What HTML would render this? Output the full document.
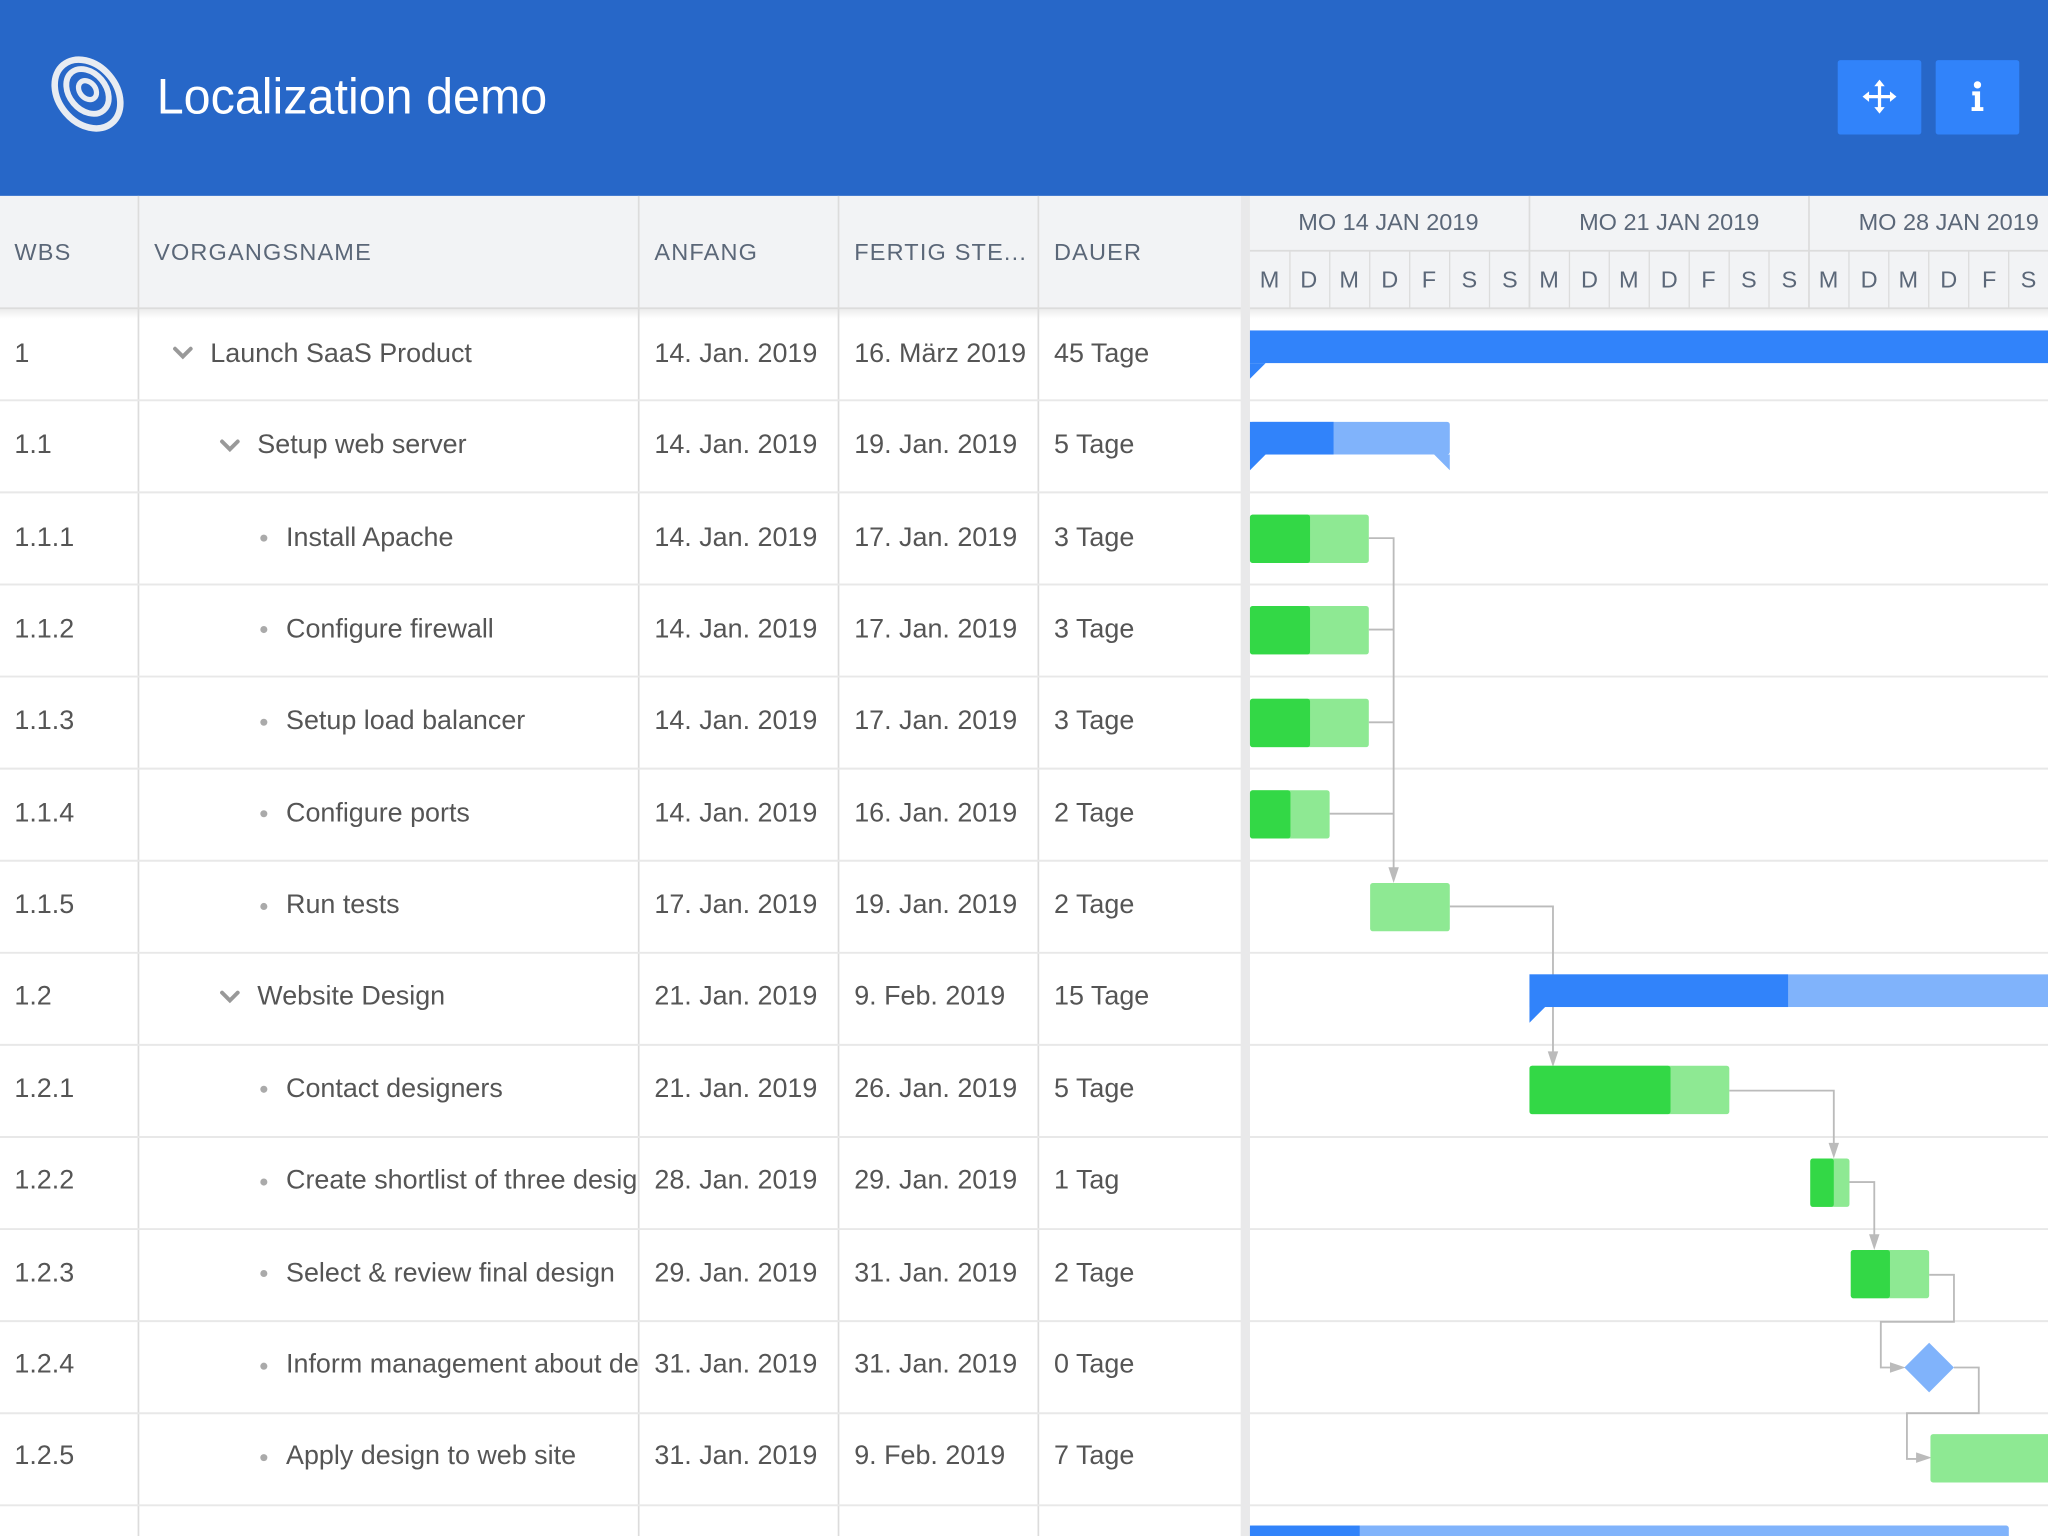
<!DOCTYPE html>
<html><head><meta charset="utf-8"><style>
html,body{margin:0;padding:0;background:#fff;overflow:hidden}
svg{display:block}
text{font-family:"Liberation Sans",sans-serif}
.h{fill:#5b6778;font-size:18px;letter-spacing:0.9px}
.t{fill:#555;font-size:20.6px}
.d{fill:#5b6778;font-size:18px;text-anchor:middle}
</style></head><body>
<svg width="2048" height="1536" viewBox="0 0 1568 1176" xmlns="http://www.w3.org/2000/svg">
<defs>
<clipPath id="nc"><rect x="106" y="236" width="383" height="940"/></clipPath>
<linearGradient id="sh" x1="0" y1="0" x2="0" y2="1"><stop offset="0" stop-color="#000" stop-opacity="0.08"/><stop offset="1" stop-color="#000" stop-opacity="0"/></linearGradient>
</defs>
<rect width="1568" height="1176" fill="#fff"/>
<rect x="0" y="0" width="1568" height="150" fill="#2767c8"/>
<g fill="none" stroke="#e8ecf2" stroke-linecap="round">
<ellipse cx="67" cy="72" rx="22" ry="29" transform="rotate(-40 67 72)" stroke-width="5"/>
<ellipse cx="67" cy="70" rx="14" ry="19" transform="rotate(-40 67 70)" stroke-width="4.5"/>
<ellipse cx="67" cy="69" rx="6" ry="8" transform="rotate(-40 67 69)" stroke-width="4"/>
</g>
<text x="120" y="87" fill="#fff" font-size="38" textLength="299" lengthAdjust="spacingAndGlyphs">Localization demo</text>
<rect x="1407" y="46" width="64" height="57" rx="2" fill="#3183fa"/>
<rect x="1482" y="46" width="64" height="57" rx="2" fill="#3183fa"/>
<g fill="#fff" stroke="#fff">
<path d="M1439 63v22M1428 74h22" stroke-width="2.5" fill="none"/>
<path d="M1439 61l-4 5h8zM1439 87l-4-5h8zM1426 74l5-4v8zM1452 74l-5-4v8z" stroke="none"/>
</g>
<circle cx="1514" cy="65" r="2.8" fill="#fff"/>
<path d="M1510 70h6v12h2.5v3h-9v-3h2.5v-9h-2z" fill="#fff"/>
<rect x="0" y="150" width="950" height="86" fill="#f2f3f5"/>
<rect x="957" y="150" width="611" height="86" fill="#f2f3f5"/>
<rect x="0" y="236" width="1568" height="8" fill="url(#sh)"/>
<rect x="950" y="150" width="7" height="1026" fill="#e9e9ea"/>
<g stroke="#dcdcdc" stroke-width="1.3">
<line x1="0" y1="236" x2="950" y2="236"/><line x1="957" y1="236" x2="1568" y2="236"/>
<line x1="106" y1="150" x2="106" y2="1176"/><line x1="489" y1="150" x2="489" y2="1176"/>
<line x1="642" y1="150" x2="642" y2="1176"/><line x1="795" y1="150" x2="795" y2="1176"/>
<line x1="957" y1="192" x2="1568" y2="192"/>
<line x1="1171" y1="150" x2="1171" y2="236"/><line x1="1385" y1="150" x2="1385" y2="236"/>
</g>
<text class="h" x="11" y="199">WBS</text>
<text class="h" x="118" y="199">VORGANGSNAME</text>
<text class="h" x="501" y="199">ANFANG</text>
<text class="h" x="654" y="199">FERTIG STE...</text>
<text class="h" x="807" y="199">DAUER</text>
<text class="d" x="1063" y="176" font-size="19">MO 14 JAN 2019</text>
<text class="d" x="1278" y="176" font-size="19">MO 21 JAN 2019</text>
<text class="d" x="1492" y="176" font-size="19">MO 28 JAN 2019</text>
<g stroke="#dcdcdc" stroke-width="1">
<line x1="987.6" y1="192" x2="987.6" y2="236"/><line x1="1018.1" y1="192" x2="1018.1" y2="236"/><line x1="1048.7" y1="192" x2="1048.7" y2="236"/><line x1="1079.3" y1="192" x2="1079.3" y2="236"/><line x1="1109.9" y1="192" x2="1109.9" y2="236"/><line x1="1140.4" y1="192" x2="1140.4" y2="236"/>
<line x1="1171" y1="192" x2="1171" y2="236"/><line x1="1201.6" y1="192" x2="1201.6" y2="236"/><line x1="1232.1" y1="192" x2="1232.1" y2="236"/><line x1="1262.7" y1="192" x2="1262.7" y2="236"/><line x1="1293.3" y1="192" x2="1293.3" y2="236"/><line x1="1323.9" y1="192" x2="1323.9" y2="236"/><line x1="1354.4" y1="192" x2="1354.4" y2="236"/>
<line x1="1385" y1="192" x2="1385" y2="236"/><line x1="1415.6" y1="192" x2="1415.6" y2="236"/><line x1="1446.1" y1="192" x2="1446.1" y2="236"/><line x1="1476.7" y1="192" x2="1476.7" y2="236"/><line x1="1507.3" y1="192" x2="1507.3" y2="236"/><line x1="1537.9" y1="192" x2="1537.9" y2="236"/>
</g>
<g>
<text class="d" x="972" y="220">M</text><text class="d" x="1002" y="220">D</text><text class="d" x="1033" y="220">M</text><text class="d" x="1064" y="220">D</text><text class="d" x="1094" y="220">F</text><text class="d" x="1125" y="220">S</text><text class="d" x="1156" y="220">S</text>
<text class="d" x="1186" y="220">M</text><text class="d" x="1217" y="220">D</text><text class="d" x="1247" y="220">M</text><text class="d" x="1278" y="220">D</text><text class="d" x="1308" y="220">F</text><text class="d" x="1339" y="220">S</text><text class="d" x="1370" y="220">S</text>
<text class="d" x="1400" y="220">M</text><text class="d" x="1431" y="220">D</text><text class="d" x="1461" y="220">M</text><text class="d" x="1492" y="220">D</text><text class="d" x="1523" y="220">F</text><text class="d" x="1553" y="220">S</text>
</g>
<g stroke="#e8e8e8" stroke-width="1.5">
<line x1="0" y1="306.5" x2="1568" y2="306.5"/><line x1="0" y1="377" x2="1568" y2="377"/><line x1="0" y1="447.5" x2="1568" y2="447.5"/><line x1="0" y1="518" x2="1568" y2="518"/><line x1="0" y1="588.5" x2="1568" y2="588.5"/><line x1="0" y1="659" x2="1568" y2="659"/><line x1="0" y1="729.5" x2="1568" y2="729.5"/><line x1="0" y1="800" x2="1568" y2="800"/><line x1="0" y1="870.5" x2="1568" y2="870.5"/><line x1="0" y1="941" x2="1568" y2="941"/><line x1="0" y1="1011.5" x2="1568" y2="1011.5"/><line x1="0" y1="1082" x2="1568" y2="1082"/><line x1="0" y1="1152.5" x2="1568" y2="1152.5"/>
</g>
<rect x="950" y="236" width="7" height="940" fill="#e9e9ea"/>
<g>
<text class="t" x="11" y="277">1</text><text class="t" x="11" y="347">1.1</text><text class="t" x="11" y="418">1.1.1</text><text class="t" x="11" y="488">1.1.2</text><text class="t" x="11" y="558">1.1.3</text><text class="t" x="11" y="629">1.1.4</text><text class="t" x="11" y="699">1.1.5</text><text class="t" x="11" y="769">1.2</text><text class="t" x="11" y="840">1.2.1</text><text class="t" x="11" y="910">1.2.2</text><text class="t" x="11" y="981">1.2.3</text><text class="t" x="11" y="1051">1.2.4</text><text class="t" x="11" y="1121">1.2.5</text>
</g>
<g fill="none" stroke="#999" stroke-width="3" stroke-linecap="round">
<path d="M134 267l6 6 6-6"/><path d="M170 338l6 6 6-6"/><path d="M170 760l6 6 6-6"/>
</g>
<g fill="#aaa">
<circle cx="202" cy="412" r="2.7"/><circle cx="202" cy="482" r="2.7"/><circle cx="202" cy="553" r="2.7"/><circle cx="202" cy="623" r="2.7"/><circle cx="202" cy="694" r="2.7"/><circle cx="202" cy="834" r="2.7"/><circle cx="202" cy="905" r="2.7"/><circle cx="202" cy="975" r="2.7"/><circle cx="202" cy="1046" r="2.7"/><circle cx="202" cy="1116" r="2.7"/>
</g>
<g clip-path="url(#nc)">
<text class="t" x="161" y="277">Launch SaaS Product</text>
<text class="t" x="197" y="347">Setup web server</text>
<text class="t" x="219" y="418">Install Apache</text>
<text class="t" x="219" y="488">Configure firewall</text>
<text class="t" x="219" y="558">Setup load balancer</text>
<text class="t" x="219" y="629">Configure ports</text>
<text class="t" x="219" y="699">Run tests</text>
<text class="t" x="197" y="769">Website Design</text>
<text class="t" x="219" y="840">Contact designers</text>
<text class="t" x="219" y="910">Create shortlist of three designers</text>
<text class="t" x="219" y="981">Select &amp; review final design</text>
<text class="t" x="219" y="1051">Inform management about decision</text>
<text class="t" x="219" y="1121">Apply design to web site</text>
</g>
<g>
<text class="t" x="501" y="277">14. Jan. 2019</text><text class="t" x="654" y="277">16. März 2019</text><text class="t" x="807" y="277">45 Tage</text>
<text class="t" x="501" y="347">14. Jan. 2019</text><text class="t" x="654" y="347">19. Jan. 2019</text><text class="t" x="807" y="347">5 Tage</text>
<text class="t" x="501" y="418">14. Jan. 2019</text><text class="t" x="654" y="418">17. Jan. 2019</text><text class="t" x="807" y="418">3 Tage</text>
<text class="t" x="501" y="488">14. Jan. 2019</text><text class="t" x="654" y="488">17. Jan. 2019</text><text class="t" x="807" y="488">3 Tage</text>
<text class="t" x="501" y="558">14. Jan. 2019</text><text class="t" x="654" y="558">17. Jan. 2019</text><text class="t" x="807" y="558">3 Tage</text>
<text class="t" x="501" y="629">14. Jan. 2019</text><text class="t" x="654" y="629">16. Jan. 2019</text><text class="t" x="807" y="629">2 Tage</text>
<text class="t" x="501" y="699">17. Jan. 2019</text><text class="t" x="654" y="699">19. Jan. 2019</text><text class="t" x="807" y="699">2 Tage</text>
<text class="t" x="501" y="769">21. Jan. 2019</text><text class="t" x="654" y="769">9. Feb. 2019</text><text class="t" x="807" y="769">15 Tage</text>
<text class="t" x="501" y="840">21. Jan. 2019</text><text class="t" x="654" y="840">26. Jan. 2019</text><text class="t" x="807" y="840">5 Tage</text>
<text class="t" x="501" y="910">28. Jan. 2019</text><text class="t" x="654" y="910">29. Jan. 2019</text><text class="t" x="807" y="910">1 Tag</text>
<text class="t" x="501" y="981">29. Jan. 2019</text><text class="t" x="654" y="981">31. Jan. 2019</text><text class="t" x="807" y="981">2 Tage</text>
<text class="t" x="501" y="1051">31. Jan. 2019</text><text class="t" x="654" y="1051">31. Jan. 2019</text><text class="t" x="807" y="1051">0 Tage</text>
<text class="t" x="501" y="1121">31. Jan. 2019</text><text class="t" x="654" y="1121">9. Feb. 2019</text><text class="t" x="807" y="1121">7 Tage</text>
</g>
<g fill="none" stroke="#bbb" stroke-width="1.4">
<path d="M1048 412H1067V670"/><path d="M1048 482H1067"/><path d="M1048 553H1067"/><path d="M1018 623H1067"/>
<path d="M1110 694H1189V811"/><path d="M1324 835H1404V881"/><path d="M1416 905H1435V952"/>
<path d="M1477 976H1496V1012H1440V1047H1453"/><path d="M1496 1047H1515V1082H1460V1117H1473"/>
</g>
<g fill="#bbb">
<path d="M1063 664h8l-4 12z"/><path d="M1185 805h8l-4 12z"/><path d="M1400 875h8l-4 12z"/><path d="M1431 945h8l-4 12z"/>
<path d="M1447 1043v8l12-4z"/><path d="M1467 1112v8l12-4z"/>
</g>
<rect x="957" y="253" width="611" height="25" fill="#3183fa"/><path d="M957 278h12l-12 12z" fill="#3183fa"/>
<rect x="957" y="323" width="153" height="25" rx="2" fill="#80b3fb"/><rect x="957" y="323" width="64" height="25" fill="#3183fa"/>
<path d="M957 348h12l-12 12z" fill="#3183fa"/><path d="M1110 348h-12l12 12z" fill="#80b3fb"/>
<rect x="957" y="394" width="91" height="37" rx="2" fill="#8ee993"/><rect x="957" y="394" width="46" height="37" rx="2" fill="#33d846"/>
<rect x="957" y="464" width="91" height="37" rx="2" fill="#8ee993"/><rect x="957" y="464" width="46" height="37" rx="2" fill="#33d846"/>
<rect x="957" y="535" width="91" height="37" rx="2" fill="#8ee993"/><rect x="957" y="535" width="46" height="37" rx="2" fill="#33d846"/>
<rect x="957" y="605" width="61" height="37" rx="2" fill="#8ee993"/><rect x="957" y="605" width="31" height="37" rx="2" fill="#33d846"/>
<rect x="1049" y="676" width="61" height="37" rx="2" fill="#8ee993"/>
<rect x="1171" y="746" width="397" height="25" fill="#80b3fb"/><rect x="1171" y="746" width="198" height="25" fill="#3183fa"/><path d="M1171 771h12l-12 12z" fill="#3183fa"/>
<rect x="1171" y="816" width="153" height="37" rx="2" fill="#8ee993"/><rect x="1171" y="816" width="108" height="37" rx="2" fill="#33d846"/>
<rect x="1386" y="887" width="30" height="37" rx="2" fill="#8ee993"/><rect x="1386" y="887" width="18" height="37" rx="2" fill="#33d846"/>
<rect x="1417" y="957" width="60" height="37" rx="2" fill="#8ee993"/><rect x="1417" y="957" width="30" height="37" rx="2" fill="#33d846"/>
<path d="M1477 1028l19 19-19 19-19-19z" fill="#80b3fb"/>
<rect x="1478" y="1098" width="95" height="37" rx="2" fill="#8ee993"/>
<rect x="957" y="1168" width="581" height="20" rx="2" fill="#80b3fb"/><rect x="957" y="1168" width="84" height="20" fill="#3183fa"/>
</svg>
</body></html>
